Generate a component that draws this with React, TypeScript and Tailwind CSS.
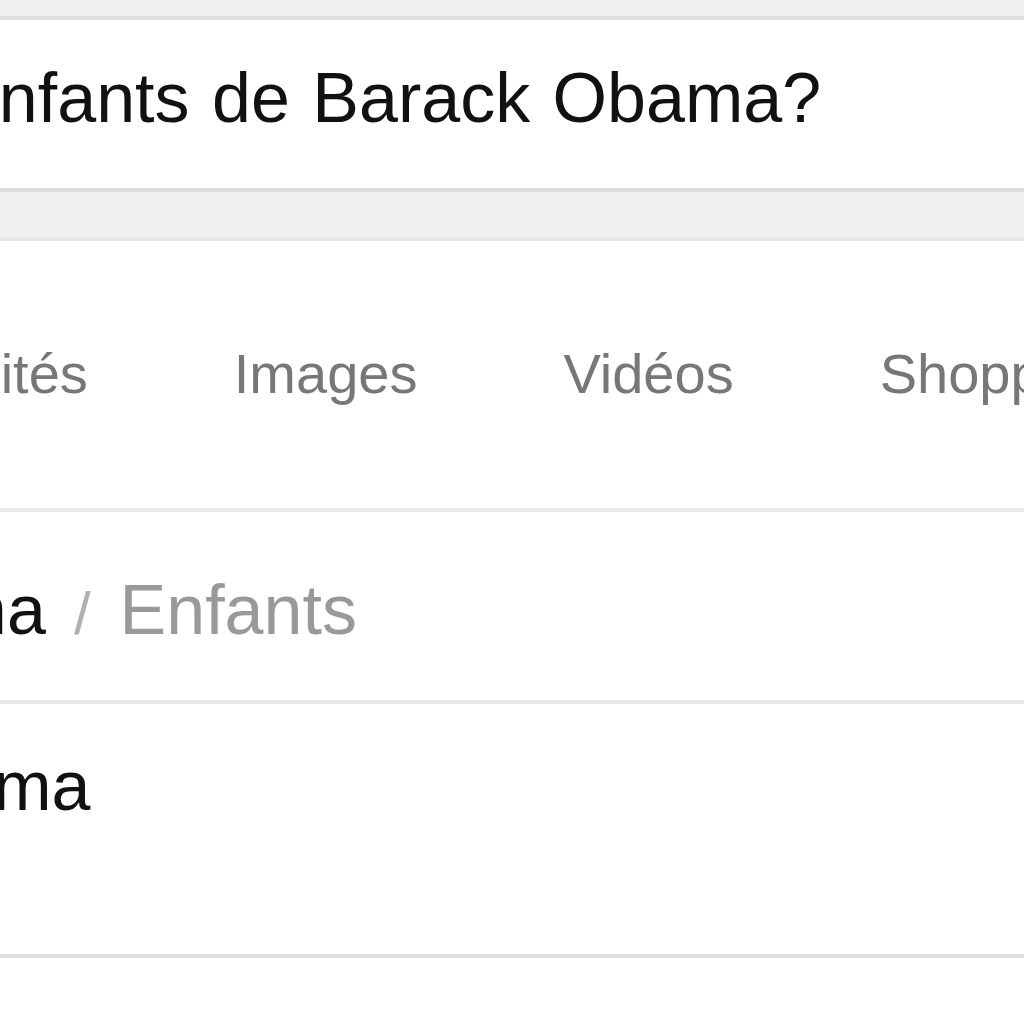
import React from 'react';

const tabs = ['Actualités', 'Images', 'Vidéos', 'Shopping', 'Plus'];

const App: React.FC = () => {
  return (
    <div className="w-[1024px] h-[1024px] overflow-hidden bg-white font-['Liberation_Sans',Arial,sans-serif]">
      <div className="h-[16px] bg-[#f0f0f0]" />

      {/* question */}
      <div className="h-[172px] border-t-4 border-[#dfdfdf] bg-white pt-[43px] whitespace-nowrap">
        <div className="text-[70px] leading-[70px] text-[#111] ml-[-152px] [word-spacing:3px]">
          les enfants de Barack Obama?
        </div>
      </div>

      <div className="h-[53px] border-t-4 border-b-4 border-t-[#dcdcdc] border-b-[#e6e6e6] bg-[#f0f0f0]" />

      {/* tabs */}
      <div className="h-[267px] pt-[105px] whitespace-nowrap">
        <div className="flex gap-[146px] ml-[-155px] text-[56px] leading-[56px] text-[#777]">
          {tabs.map((t) => (
            <span key={t}>{t}</span>
          ))}
        </div>
      </div>

      <div className="h-[4px] bg-[#ebebeb]" />

      {/* breadcrumb */}
      <div className="h-[188px] pt-[63px] whitespace-nowrap">
        <div className="flex items-baseline ml-[-421px] text-[70px] leading-[70px]">
          <span className="text-[#111]">Barack Obama</span>
          <span className="text-[60px] text-[#b0b0b0] ml-[28px] mr-[29px]">/</span>
          <span className="text-[#999]">Enfants</span>
        </div>
      </div>

      <div className="h-[4px] bg-[#e8e8e8]" />

      {/* entity */}
      <div className="h-[250px] pt-[47px] whitespace-nowrap">
        <div className="text-[70px] leading-[70px] text-[#111] ml-[-139px]">Obama</div>
      </div>

      <div className="h-[4px] bg-[#e0e0e0]" />
    </div>
  );
};

export default App;
